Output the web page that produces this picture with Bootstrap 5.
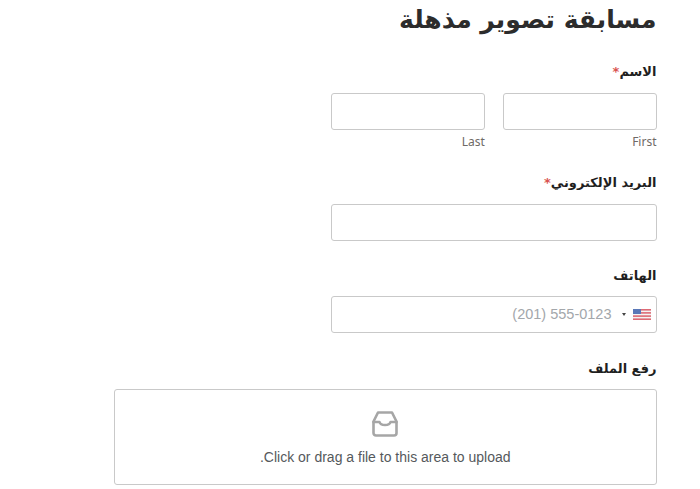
<!DOCTYPE html>
<html lang="ar" dir="rtl">
<head>
<meta charset="utf-8">
<title>مسابقة تصوير مذهلة</title>
<link href="https://cdn.jsdelivr.net/npm/bootstrap@5.3.0/dist/css/bootstrap.min.css" rel="stylesheet">
<style>
html,body{height:489px;overflow:hidden;background:#fff}
body{font-family:"Liberation Sans","DejaVu Sans",sans-serif;color:#222}
.form-wrap{width:542.5px;margin-right:43.5px;margin-left:auto}
.page-title{font-family:"DejaVu Sans",sans-serif;font-size:25px;font-weight:700;line-height:36px;color:#2c2c2c;margin:2px 0 24px}
.fld-label{display:block;font-family:"DejaVu Sans",sans-serif;font-weight:700;font-size:13px;line-height:20px;color:#1f1f1f;margin-bottom:11px}
.low-label{padding-top:1px;margin-bottom:10px}
.req{color:#d9534f}
.half{width:325.5px}
.fld-input{display:block;height:37px;border:1px solid #c9c9c9;border-radius:3px;background:#fff}
.name-row>div .fld-input{width:100%}
.sub-label{font-family:"Noto Sans",sans-serif;font-size:12px;line-height:16px;color:#6f6a66;margin-top:4px;text-align:right}
.name-row{gap:18px}
.name-row>div{flex:1 1 0}
.fld{margin-bottom:24px}
.fld-last{margin-bottom:25px}
.name-fld{margin-bottom:23px}
.phone-box{display:flex;align-items:center;height:37px;border:1px solid #c9c9c9;border-radius:3px;padding:0 5px 0 0;width:325.5px}
.phone-ph{font-size:14.5px;color:#a3a7ab;direction:ltr;margin-right:10px}
.caret-mark{width:0;height:0;border-left:2.5px solid transparent;border-right:2.5px solid transparent;border-top:3px solid #444;margin-right:7px}
.drop-area{height:96px;border:1px solid #c9c9c9;border-radius:3px;text-align:center;padding-top:21px;color:#555}
.drop-icon{display:block;margin:0 auto}
.drop-text{font-size:14px;line-height:20px;margin-top:10px;color:#55595c}
</style>
</head>
<body>
<div class="form-wrap">
  <h1 class="page-title">مسابقة تصوير مذهلة</h1>
  <div class="name-fld">
    <label class="fld-label">الاسم<span class="req">*</span></label>
    <div class="d-flex name-row half">
      <div><input class="fld-input" type="text"><div class="sub-label">First</div></div>
      <div><input class="fld-input" type="text"><div class="sub-label">Last</div></div>
    </div>
  </div>
  <div class="fld">
    <label class="fld-label">البريد الإلكتروني<span class="req">*</span></label>
    <input class="fld-input half" type="email">
  </div>
  <div class="fld-last">
    <label class="fld-label low-label">الهاتف</label>
    <div class="phone-box">
      <svg width="18" height="11" viewBox="0 0 18 11"><rect width="18" height="11" fill="#f4f4f4"/><g fill="#dd6a75"><rect width="18" height="1.6"/><rect y="3.100" width="18" height="1.6"/><rect y="6.300" width="18" height="1.6"/><rect y="9.400" width="18" height="1.6"/></g><rect width="8" height="5" fill="#5a78b8"/></svg>
      <span class="caret-mark"></span>
      <span class="phone-ph">(201) 555-0123</span>
    </div>
  </div>
  <div>
    <label class="fld-label low-label">رفع الملف</label>
    <div class="drop-area">
      <svg class="drop-icon" width="26" height="26" viewBox="0 0 26 26" fill="none" stroke="#a6a6a6" stroke-width="2.6" stroke-linejoin="round" stroke-linecap="round"><path d="M6 1.500h14l4.500 9v11.500a2.500 2.500 0 0 1-2.500 2.500h-18a2.500 2.500 0 0 1-2.500-2.500v-11.500z"/><path d="M1.500 11h6c.6 2.200 2.200 3 5.500 3s4.900-.8 5.500-3h6"/></svg>
      <div class="drop-text">Click or drag a file to this area to upload.</div>
    </div>
  </div>
</div>
</body>
</html>
